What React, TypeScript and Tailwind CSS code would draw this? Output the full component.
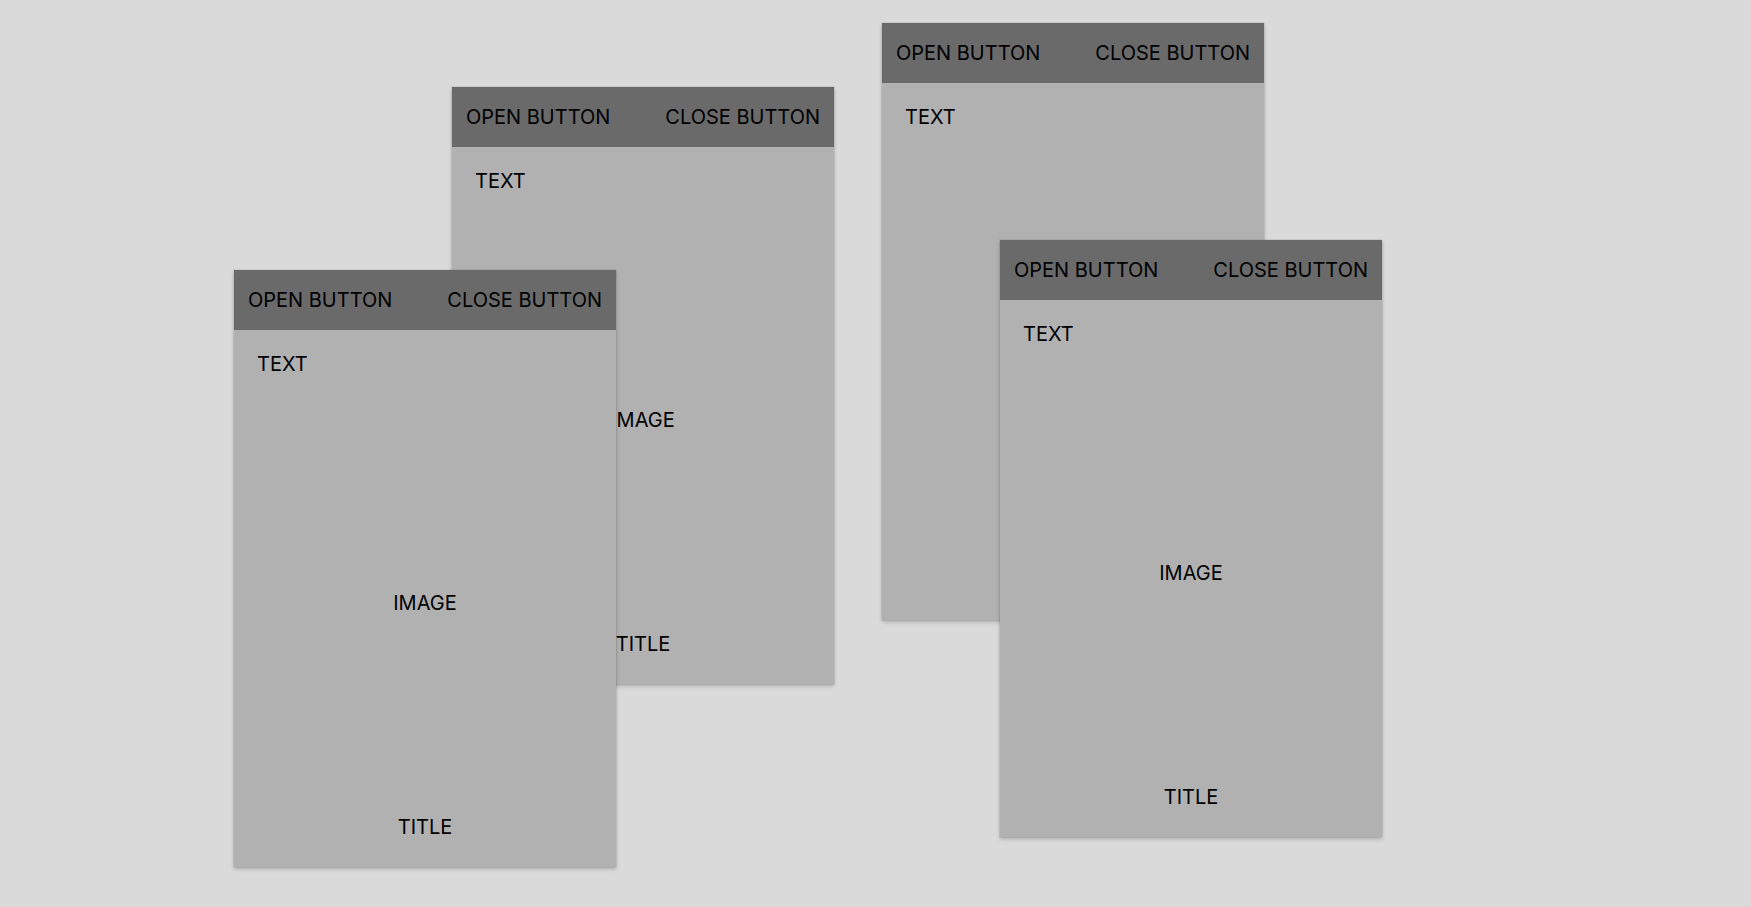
const cards = [
  { id: "a", left: 452, top: 87 },
  { id: "b", left: 234, top: 270 },
  { id: "c", left: 882, top: 23 },
  { id: "d", left: 1000, top: 240 },
];

const Card = ({ left, top }: { left: number; top: number }) => (
  <div
    className="absolute flex h-[597px] w-[382px] flex-col bg-[#b1b1b1] shadow-[0_2px_4px_rgba(0,0,0,0.22)] ring-1 ring-black/5"
    style={{ left, top }}
  >
    <div className="flex h-[60px] items-center justify-between bg-[#6a6a6a] px-[14px]">
      <span>OPEN BUTTON</span>
      <span>CLOSE BUTTON</span>
    </div>
    <div className="flex flex-1 flex-col">
      <div className="px-[23px] pt-[22px]">TEXT</div>
      <div className="flex flex-1 items-center justify-center pt-[15px]">IMAGE</div>
      <div className="pb-[28px] text-center">TITLE</div>
    </div>
  </div>
);

export default function App() {
  return (
    <div className="relative h-[907px] w-full overflow-hidden bg-[#dadada] font-['Inter',sans-serif] text-[20px] leading-[24px] text-black">
      {cards.map((c) => (
        <Card key={c.id} left={c.left} top={c.top} />
      ))}
    </div>
  );
}
